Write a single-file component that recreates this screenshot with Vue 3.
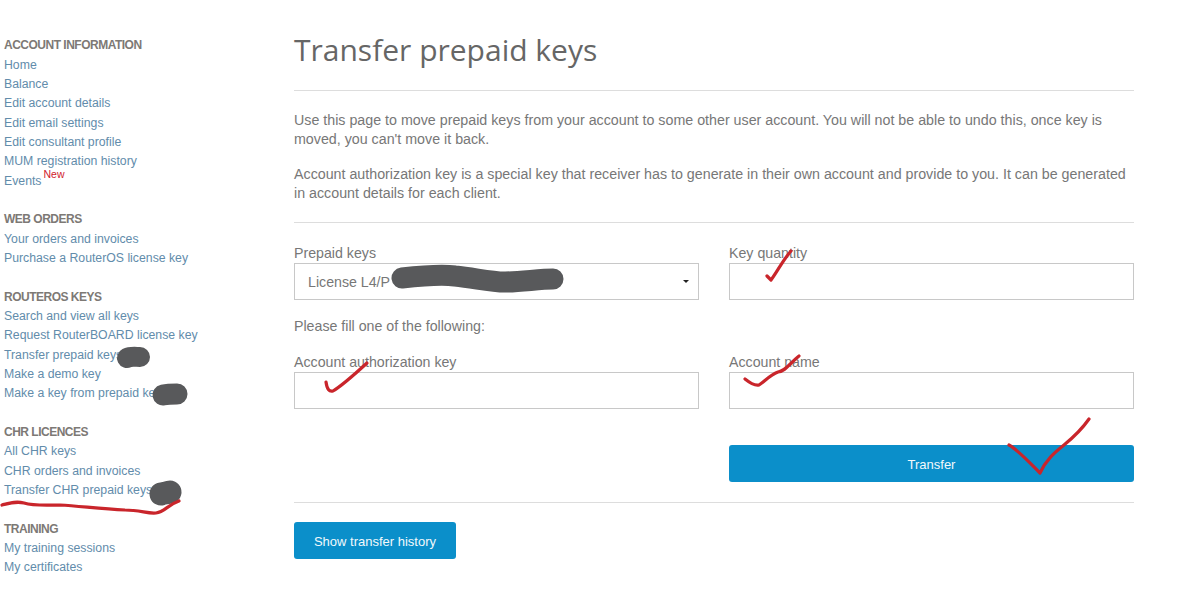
<script setup>
const groups = [
  { title: 'ACCOUNT INFORMATION', items: ['Home', 'Balance', 'Edit account details', 'Edit email settings', 'Edit consultant profile', 'MUM registration history', 'Events'] },
  { title: 'WEB ORDERS', items: ['Your orders and invoices', 'Purchase a RouterOS license key'] },
  { title: 'ROUTEROS KEYS', items: ['Search and view all keys', 'Request RouterBOARD license key', 'Transfer prepaid keys', 'Make a demo key', 'Make a key from prepaid key'] },
  { title: 'CHR LICENCES', items: ['All CHR keys', 'CHR orders and invoices', 'Transfer CHR prepaid keys'] },
  { title: 'TRAINING', items: ['My training sessions', 'My certificates'] },
]
</script>

<template>
  <div class="page">
    <nav class="side">
      <ul v-for="g in groups" :key="g.title" class="group">
        <li class="head">{{ g.title }}</li>
        <li v-for="i in g.items" :key="i"><a class="link">{{ i }}</a><sup v-if="i === 'Events'" class="new">New</sup></li>
      </ul>
    </nav>
    <main class="main">
      <h1 class="title">Transfer prepaid keys</h1>
      <hr class="rule first" />
      <p class="para">Use this page to move prepaid keys from your account to some other user account. You will not be able to undo this, once key is moved, you can't move it back.</p>
      <p class="para second">Account authorization key is a special key that receiver has to generate in their own account and provide to you. It can be generated in account details for each client.</p>
      <hr class="rule mid" />
      <form class="form" @submit.prevent>
        <div class="field">
          <label class="label">Prepaid keys</label>
          <div class="select"><span class="value">License L4/P</span><i class="caret"></i></div>
        </div>
        <div class="field">
          <label class="label">Key quantity</label>
          <input class="input" />
        </div>
        <p class="hint">Please fill one of the following:</p>
        <div class="field">
          <label class="label">Account authorization key</label>
          <input class="input" />
        </div>
        <div class="field">
          <label class="label">Account name</label>
          <input class="input" />
        </div>
        <div></div>
        <button class="btn wide">Transfer</button>
      </form>
      <hr class="rule last" />
      <button class="btn hist">Show transfer history</button>
    </main>
    <svg class="marks" width="1178" height="591" viewBox="0 0 1178 591" fill="none" stroke-linecap="round" stroke-linejoin="round">
      <g stroke="#58595b">
        <path d="M127 358C131 356 136 357 140 357" stroke-width="20" />
        <path d="M163 395C168 394 172 394 177 394" stroke-width="21" />
        <path d="M161 494C164 493 167 493 170 492" stroke-width="23" />
        <path d="M402 278C420 276 440 274 455 276C475 278 490 282 505 282C520 282 540 279 553 279" stroke-width="21" />
      </g>
      <g stroke="#c9252b" stroke-width="3.200">
        <path d="M2 505C10 503 16 501 24 503C34 506 44 505 60 505C80 506 100 509 125 510C140 510 148 514 156 513C165 512 167 505 179 501" />
        <path d="M326 382C327 389 329 392 333 391C343 385 355 374 367 363" />
        <path d="M767 276L771 280C777 272 783 260 791 251" />
        <path d="M745 379C750 383 755 386 759 385C765 381 770 375 778 372C786 371 790 363 799 356" />
        <path d="M1009 445C1017 449 1030 463 1040 473C1046 460 1054 453 1064 445C1075 436 1082 429 1089 419" />
      </g>
    </svg>
  </div>
</template>

<style>
body { background: #fff; }
</style>

<style scoped>
.page {
  position: relative;
  display: flex;
  width: 1178px;
  height: 591px;
  overflow: hidden;
  font-family: "Liberation Sans", Arial, sans-serif;
  color: #777;
}
.side {
  width: 290px;
  padding: 36.400px 0 0 4px;
  box-sizing: content-box;
  flex: none;
}
.group {
  list-style: none;
  margin: 0 0 19.400px;
  padding: 0;
  font-size: 12.270px;
  line-height: 19.310px;
}
.head {
  font-size: 12px;
  font-weight: 700;
  color: #7d7975;
  letter-spacing: -0.500px;
}
.link {
  color: #628cab;
}
.new {
  color: #d0202c;
  font-size: 10.500px;
  line-height: 0;
  margin-left: 2px;
  position: relative;
  top: -3px;
  vertical-align: 4px;
}
.main {
  width: 840px;
  flex: none;
}
.title {
  margin: 0;
  padding-top: 30px;
  font-family: "Open Sans", sans-serif;
  font-weight: 400;
  font-size: 30px;
  line-height: 40px;
  color: #666;
}
.rule {
  margin: 0;
  border: 0;
  border-top: 1px solid #ddd;
}
.first { margin-top: 19.500px; }
.para {
  margin: 20px 0 0;
  font-size: 14.250px;
  line-height: 19px;
  color: #777;
}
.second { margin-top: 16px; }
.mid { margin-top: 19px; }
.form {
  display: grid;
  grid-template-columns: 405px 405px;
  column-gap: 30px;
  margin-top: 21px;
}
.field {
  display: flex;
  flex-direction: column;
}
.label {
  font-size: 14.200px;
  line-height: 19px;
  color: #777;
}
.select, .input {
  box-sizing: border-box;
  height: 37px;
  width: 100%;
  border: 1px solid #c8c8c8;
  background: #fff;
  margin: 0;
  outline: 0;
}
.select {
  display: flex;
  align-items: center;
  justify-content: space-between;
  padding: 0 9px 0 13px;
  font-size: 14.200px;
  color: #777;
}
.value {
  padding-top: 1px;
}
.caret {
  width: 0;
  height: 0;
  border-left: 3px solid transparent;
  border-right: 3px solid transparent;
  border-top: 3px solid #222;
}
.hint {
  grid-column: 1 / -1;
  margin: 17px 0 17px;
  font-size: 14.200px;
  line-height: 19px;
  color: #777;
}
.btn {
  border: 0;
  border-radius: 3px;
  height: 37px;
  background: #0b8fca;
  color: #f2f9fc;
  font-family: "Liberation Sans", Arial, sans-serif;
  font-size: 13px;
  padding: 2px 0 0;
}
.wide {
  width: 405px;
  margin-top: 36px;
}
.last { margin-top: 20px; }
.hist {
  display: block;
  width: 162px;
  margin-top: 19px;
}
.marks {
  position: absolute;
  left: 0;
  top: 0;
  pointer-events: none;
}
</style>
